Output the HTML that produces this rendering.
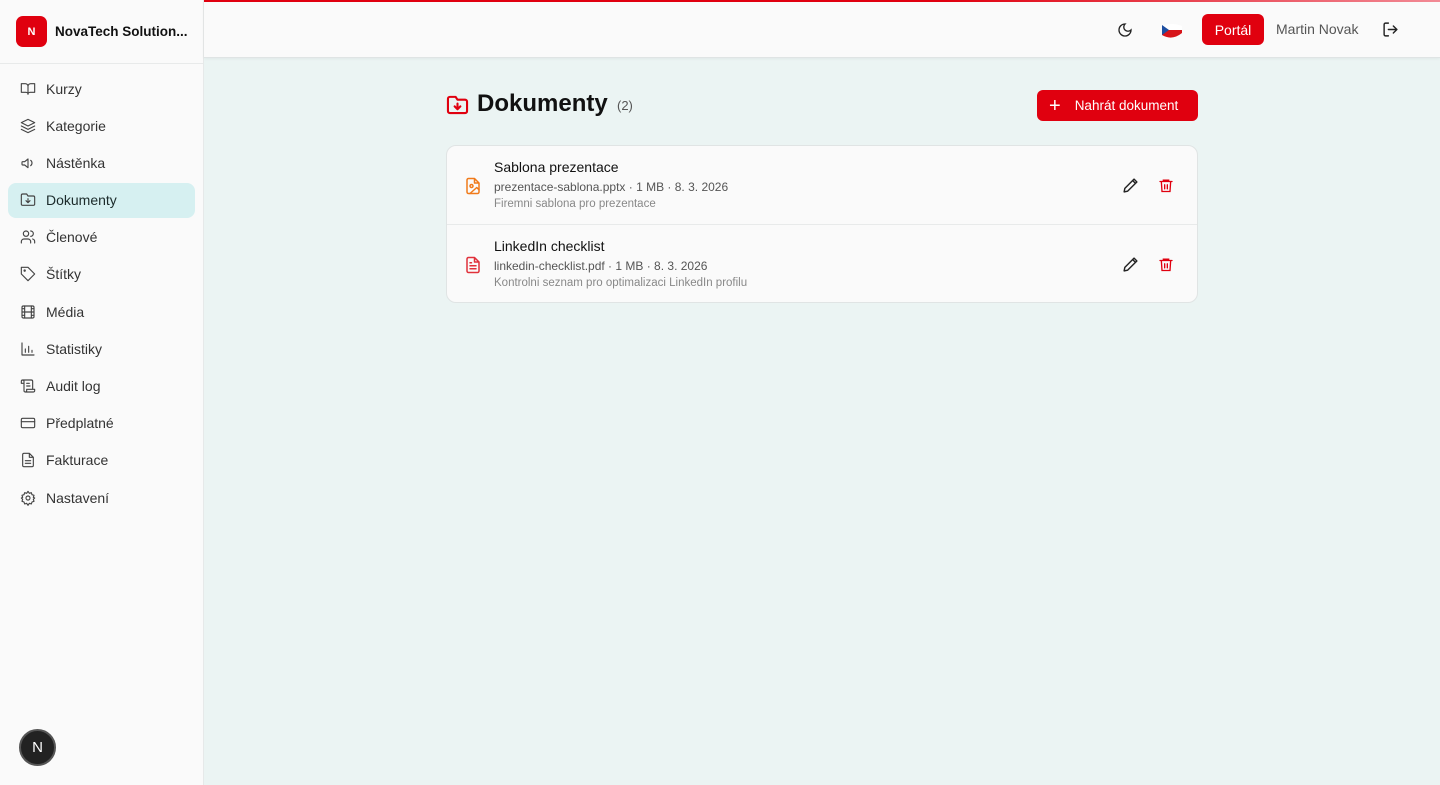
<!DOCTYPE html>
<html><head><meta charset="utf-8"><style>
*{box-sizing:border-box;margin:0;padding:0}
body{width:1440px;height:785px;overflow:hidden;font-family:"Liberation Sans",sans-serif;background:#ebf4f3;position:relative;color:#1a1f1e}
.side{position:absolute;left:0;top:0;width:204px;height:785px;background:#fafafa;border-right:1px solid #e6e9e9}
.logo{height:64px;border-bottom:1px solid #e8eaea;display:flex;align-items:center;padding-left:16px}
.logo .b{width:31px;height:31px;background:#e0000f;border-radius:7px;color:#fff;font-weight:bold;font-size:11px;display:flex;align-items:center;justify-content:center}
.logo span{margin-left:8px;font-weight:bold;font-size:13.5px;color:#111}
.nav{padding-top:7px}
.it{height:35px;margin:0 8px 2.2px;border-radius:8px;display:flex;align-items:center;padding-left:12px;font-size:14px;color:#333}
.it svg{width:16px;height:16px;margin-right:10px;fill:none;stroke:#444;stroke-width:1.7;stroke-linecap:round;stroke-linejoin:round}
.it.a{background:#d6f0f1;color:#1c2b2b}
.av{position:absolute;left:19px;top:729px;width:37px;height:37px;border-radius:50%;background:#222;border:2px solid #555;color:#fff;font-size:15px;display:flex;align-items:center;justify-content:center}
.top{position:absolute;left:204px;top:0;right:0;height:58px;background:#fafafa;border-bottom:1px solid #dfe4e4;box-shadow:0 1px 3px rgba(0,0,0,.05)}
.line{position:absolute;left:204px;top:0;right:0;height:2px;background:linear-gradient(90deg,#e0000f,#e0000f 60%,#f28a95)}
.portal{position:absolute;left:1202px;top:14px;width:62px;height:31px;background:#e0000f;border-radius:6px;color:#fff;font-size:14px;display:flex;align-items:center;justify-content:center}
.name{position:absolute;left:1276px;top:21px;font-size:14px;color:#555}
h1{position:absolute;left:477px;top:90px;font-size:24px;font-weight:bold;color:#111}
.cnt{position:absolute;left:617px;top:98px;font-size:13px;color:#555}
.btn{position:absolute;left:1037px;top:90px;width:161px;height:31px;background:#e0000f;border-radius:6px;color:#fff;font-size:13.5px;display:flex;align-items:center;padding-left:12px}
.card{position:absolute;left:446px;top:145px;width:752px;height:158px;background:#fafafa;border:1px solid #e0e4e4;border-radius:10px}
.row{position:relative;height:79px;border-bottom:1px solid #e8eaea}
.row:last-child{border:none}
.t{position:absolute;left:47px;top:13px;font-size:14px;color:#111}
.m{position:absolute;left:47px;top:34px;font-size:12px;color:#555}
.d{position:absolute;left:47px;top:52px;font-size:11.5px;color:#888}
.fi{position:absolute;left:17px;top:30px}
.ac{position:absolute;top:31px}
</style></head><body>
<div class="side">
<div class="logo"><div class="b">N</div><span>NovaTech Solution...</span></div>
<div class="nav">
<div class="it"><svg viewBox="0 0 24 24"><path d="M2 4h6a4 4 0 0 1 4 4v12a3 3 0 0 0-3-3H2zM22 4h-6a4 4 0 0 0-4 4v12a3 3 0 0 1 3-3h7z"/></svg>Kurzy</div>
<div class="it"><svg viewBox="0 0 24 24"><path d="M12 2 2 7l10 5 10-5zM2 12l10 5 10-5M2 17l10 5 10-5"/></svg>Kategorie</div>
<div class="it"><svg viewBox="0 0 24 24"><path d="M3 11v3a1 1 0 0 0 1 1h3l5 4V6L7 10H4a1 1 0 0 0-1 1zM16 8a5 5 0 0 1 0 8"/></svg>Nástěnka</div>
<div class="it a"><svg viewBox="0 0 24 24"><path d="M20 20a2 2 0 0 0 2-2V8a2 2 0 0 0-2-2h-8l-2-3H4a2 2 0 0 0-2 2v13a2 2 0 0 0 2 2zM12 10v6M9 13l3 3 3-3"/></svg>Dokumenty</div>
<div class="it"><svg viewBox="0 0 24 24"><circle cx="9" cy="7" r="4"/><path d="M2 21v-2a4 4 0 0 1 4-4h6a4 4 0 0 1 4 4v2M16 3a4 4 0 0 1 0 8M22 21v-2a4 4 0 0 0-3-4"/></svg>Členové</div>
<div class="it"><svg viewBox="0 0 24 24"><path d="M12 2H2v10l10 10 10-10z"/><circle cx="7" cy="7" r="1"/></svg>Štítky</div>
<div class="it"><svg viewBox="0 0 24 24"><rect x="3" y="3" width="18" height="18" rx="2"/><path d="M7 3v18M17 3v18M3 12h18M3 7h4M3 17h4M17 7h4M17 17h4"/></svg>Média</div>
<div class="it"><svg viewBox="0 0 24 24"><path d="M3 3v18h18M8 17v-5M13 17V8M18 17v-3"/></svg>Statistiky</div>
<div class="it"><svg viewBox="0 0 24 24"><path d="M8 21h12a2 2 0 0 0 2-2v-2H10v2a2 2 0 1 1-4 0V5a2 2 0 1 0-4 0v3h4M19 17V5a2 2 0 0 0-2-2H4M14 8h-4M15 12h-5"/></svg>Audit log</div>
<div class="it"><svg viewBox="0 0 24 24"><rect x="2" y="5" width="20" height="14" rx="2"/><path d="M2 10h20"/></svg>Předplatné</div>
<div class="it"><svg viewBox="0 0 24 24"><path d="M14 2H6a2 2 0 0 0-2 2v16a2 2 0 0 0 2 2h12a2 2 0 0 0 2-2V8zM14 2v6h6M16 13H8M16 17H8"/></svg>Fakturace</div>
<div class="it"><svg viewBox="0 0 24 24"><circle cx="12" cy="12" r="3"/><path d="M12 2l2 3 3-1 1 3 3 1-1 3 2 1-2 2 1 3-3 1-1 3-3-1-2 3-2-3-3 1-1-3-3-1 1-3-2-2 2-1-1-3 3-1 1-3 3 1z"/></svg>Nastavení</div>
</div>
<div class="av">N</div>
</div>
<div class="top"></div><div class="line"></div>
<svg style="position:absolute;left:1117px;top:22px" width="16" height="16" viewBox="0 0 24 24" fill="none" stroke="#222" stroke-width="2"><path d="M12 3a6 6 0 0 0 9 9 9 9 0 1 1-9-9z"/></svg>
<svg style="position:absolute;left:1162px;top:21px" width="20" height="18" viewBox="0 0 20 18"><path d="M0 5 Q10 1 20 5 V9 H7z" fill="#fff"/><path d="M7 9H20V12Q10 20 0 14V9z" fill="#d7141a"/><path d="M0 4 L7 9 L0 14z" fill="#1d4ea0"/></svg>
<div class="portal">Portál</div>
<div class="name">Martin Novak</div>
<svg style="position:absolute;left:1382px;top:21px" width="17" height="17" viewBox="0 0 24 24" fill="none" stroke="#222" stroke-width="2" stroke-linecap="round" stroke-linejoin="round"><path d="M9 21H5a2 2 0 0 1-2-2V5a2 2 0 0 1 2-2h4M16 17l5-5-5-5M21 12H9"/></svg>
<svg style="position:absolute;left:446px;top:94px" width="23" height="21" viewBox="0 0 24 22" fill="none" stroke="#e0000f" stroke-width="2.2" stroke-linecap="round" stroke-linejoin="round"><path d="M20 20a2 2 0 0 0 2-2V8a2 2 0 0 0-2-2h-8l-2-3H4a2 2 0 0 0-2 2v13a2 2 0 0 0 2 2zM12 10v6M9 13l3 3 3-3"/></svg>
<h1>Dokumenty</h1><div class="cnt">(2)</div>
<div class="btn"><span style="font-size:20px;margin-right:14px;line-height:1">+</span>Nahrát dokument</div>
<div class="card">
<div class="row">
<svg class="fi" width="18" height="20" viewBox="0 0 24 24" fill="none" stroke="#f07a1a" stroke-width="2" stroke-linecap="round" stroke-linejoin="round"><path d="M14 2H6a2 2 0 0 0-2 2v16a2 2 0 0 0 2 2h12a2 2 0 0 0 2-2V8zM14 2v6h6"/><circle cx="10" cy="12" r="2"/><path d="M20 17l-3-3-9 8"/></svg>
<div class="t">Sablona prezentace</div><div class="m">prezentace-sablona.pptx · 1 MB · 8. 3. 2026</div><div class="d">Firemni sablona pro prezentace</div>
<svg class="ac" style="left:675px" width="17" height="17" viewBox="0 0 24 24" fill="none" stroke="#222" stroke-width="2" stroke-linejoin="round"><path d="M17 3l4 4L8 20l-5 1 1-5zM15 5l4 4"/></svg>
<svg class="ac" style="left:711px" width="16" height="17" viewBox="0 0 24 24" fill="none" stroke="#e0000f" stroke-width="2" stroke-linecap="round"><path d="M3 6h18M8 6V4h8v2M5 6l1 15h12l1-15M10 11v6M14 11v6"/></svg>
</div>
<div class="row">
<svg class="fi" width="18" height="20" viewBox="0 0 24 24" fill="none" stroke="#e0303a" stroke-width="2" stroke-linecap="round" stroke-linejoin="round"><path d="M14 2H6a2 2 0 0 0-2 2v16a2 2 0 0 0 2 2h12a2 2 0 0 0 2-2V8zM14 2v6h6M16 13H8M16 17H8M10 9H8"/></svg>
<div class="t">LinkedIn checklist</div><div class="m">linkedin-checklist.pdf · 1 MB · 8. 3. 2026</div><div class="d">Kontrolni seznam pro optimalizaci LinkedIn profilu</div>
<svg class="ac" style="left:675px" width="17" height="17" viewBox="0 0 24 24" fill="none" stroke="#222" stroke-width="2" stroke-linejoin="round"><path d="M17 3l4 4L8 20l-5 1 1-5zM15 5l4 4"/></svg>
<svg class="ac" style="left:711px" width="16" height="17" viewBox="0 0 24 24" fill="none" stroke="#e0000f" stroke-width="2" stroke-linecap="round"><path d="M3 6h18M8 6V4h8v2M5 6l1 15h12l1-15M10 11v6M14 11v6"/></svg>
</div>
</div>
</body></html>
